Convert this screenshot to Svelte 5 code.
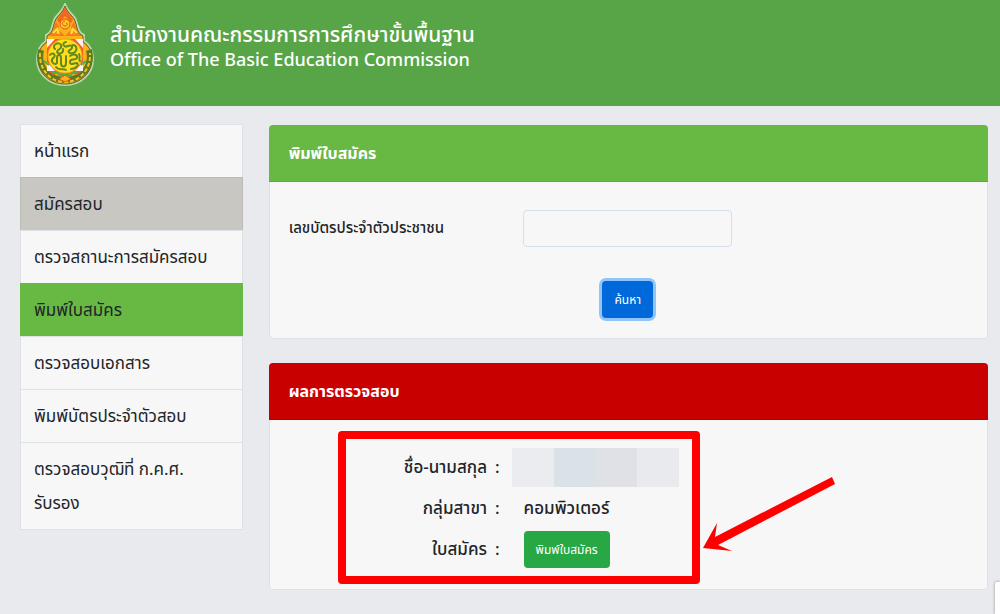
<script lang="ts">
    interface MenuItem {
        label: string;
        state?: 'hover' | 'active';
    }

    const menu: MenuItem[] = [
        { label: 'หน้าแรก' },
        { label: 'สมัครสอบ', state: 'hover' },
        { label: 'ตรวจสถานะการสมัครสอบ' },
        { label: 'พิมพ์ใบสมัคร', state: 'active' },
        { label: 'ตรวจสอบเอกสาร' },
        { label: 'พิมพ์บัตรประจำตัวสอบ' },
        { label: 'ตรวจสอบวุฒิที่ ก.ค.ศ. รับรอง' },
    ];

    let citizenId = $state('');
</script>

<header>
    <svg class="logo" viewBox="0 0 60 84" aria-hidden="true">
        <path
            d="M30 1C32 7 37 11 40 15C43 20 42 26 46 30L49 32V38C55 42 58 49 58 56C58 71 46 82 30 82S2 71 2 56C2 49 5 42 11 38V32L14 30C18 26 17 20 20 15C23 11 28 7 30 1Z"
            fill="#a4572a"
            stroke="#b5dcab"
            stroke-width="2"
        />
        <path
            d="M30 3C32 9 36 12 39 16C42 21 41 27 45 31L48 33V39C54 43 57 49 57 56C57 70 45 81 30 81S3 70 3 56C3 49 6 43 12 39V33L15 31C19 27 18 21 21 16C24 12 28 9 30 3Z"
            fill="#fbb318"
            stroke="#7d5a2c"
            stroke-width="1"
        />
        <path d="M30 4C32 10 36 13 38 17L36 20L30 13L24 20L22 17C24 13 28 10 30 4Z" fill="#f26522" />
        <path d="M21 18L24 24L20 32L25 28L30 33L35 28L40 32L36 24L39 18L42 28L46 33H14L18 28Z" fill="#f47b20" />
        <path d="M18 30L22 26L24 31M42 30L38 26L36 31" fill="none" stroke="#ffe03a" stroke-width="2" />
        <circle cx="30" cy="21" r="5" fill="#ffc62a" stroke="#e8501c" stroke-width="1" />
        <path d="M30 18C26 18 27 23 30 23C33 23 33 20 31 20" fill="none" stroke="#e8501c" stroke-width="1" />
        <path d="M6 47C2 64 14 77 30 77S58 64 54 47" fill="none" stroke="#5d7a20" stroke-width="6" />
        <path
            d="M5 50C4 66 15 79 30 79S56 66 55 50"
            fill="none"
            stroke="#f3c71a"
            stroke-width="2"
            stroke-dasharray="4 2"
        />
        <path d="M12 36H48V67L42 72L36 70L30 76L24 70L18 72L12 67Z" fill="#f15a29" />
        <path d="M12 36H20L12 45ZM48 36H40L48 45ZM12 59L20 68H12ZM48 59L40 68H48Z" fill="#fff0f0" />
        <path d="M9 58L14 62M51 58L46 62M17 70L22 69L25 73L30 71L35 73L38 69L43 70" fill="none" stroke="#4fae4a" stroke-width="2" />
        <path d="M24 76L30 72L36 76L30 79Z" fill="#ffb31a" stroke="#e8501c" />
        <circle cx="30" cy="53" r="17" fill="#ffe01a" stroke="#f9a51a" stroke-width="1" />
        <g fill="none" stroke="#678820" stroke-width="2" stroke-linecap="round" stroke-linejoin="round">
            <path d="M20 46C16 42 24 38 26 42C28 46 22 46 22 49C24 52 29 50 28 46" />
            <path d="M31 39C26 40 29 45 33 43C38 41 38 45 35 47C31 49 36 52 40 49C43 46 41 42 38 42" />
            <path d="M15 52C18 48 22 53 18 55C15 58 19 63 22 60V55C22 51 26 51 26 55V61C27 65 31 64 31 60V53" />
            <path d="M35 53C39 50 43 52 42 55C40 58 35 55 35 59C35 63 39 60 42 60C45 63 39 66 36 66" />
            <path d="M21 64C24 68 28 65 31 67M44 51C46 54 43 57 45 58" />
        </g>
    </svg>
    <div class="org">
        <strong>สำนักงานคณะกรรมการการศึกษาขั้นพื้นฐาน</strong>
        <span>Office of The Basic Education Commission</span>
    </div>
</header>

<main>
    <nav>
        {#each menu as item}
            <a href="#menu" class={item.state}>{item.label}</a>
        {/each}
    </nav>

    <div class="content">
        <section class="card">
            <h2>พิมพ์ใบสมัคร</h2>
            <form class="search" onsubmit={(e) => e.preventDefault()}>
                <label for="citizen-id">เลขบัตรประจำตัวประชาชน</label>
                <input type="text" id="citizen-id" bind:value={citizenId} />
                <button type="submit" class="btn primary">ค้นหา</button>
            </form>
        </section>

        <section class="card">
            <h2 class="danger">ผลการตรวจสอบ</h2>
            <dl>
                <dt>ชื่อ-นามสกุล<span>:</span></dt>
                <dd><div class="masked"></div></dd>
                <dt>กลุ่มสาขา<span>:</span></dt>
                <dd>คอมพิวเตอร์</dd>
                <dt>ใบสมัคร<span>:</span></dt>
                <dd><button type="button" class="btn success">พิมพ์ใบสมัคร</button></dd>
            </dl>
            <div class="highlight">
                <svg class="arrow" viewBox="0 0 132 76" aria-hidden="true">
                    <path d="M0 71L14 46L12 60L129 0L132 7L15 68L29 74Z" fill="#f00" />
                </svg>
            </div>
        </section>
    </div>
</main>

<div class="side-tab"></div>

<style>
    :global(body) {
        background: #e8eaed;
        color: #212529;
        font-family: "Noto Sans", "Noto Sans Thai", "Liberation Sans", sans-serif;
        font-size: 16px;
    }

    header {
        display: flex;
        align-items: flex-start;
        gap: 15px;
        height: 106px;
        padding: 3px 20px 0 35px;
        box-sizing: border-box;
        background: #57a546;
        color: #fff;
    }

    .logo {
        width: 60px;
        height: 84px;
        flex: none;
    }

    .org {
        display: flex;
        flex-direction: column;
        padding-top: 18px;
        font-weight: 500;
    }

    .org strong {
        font-size: 21px;
        line-height: 26px;
        font-weight: 500;
    }

    .org span {
        font-size: 18px;
        line-height: 24px;
    }

    main {
        display: grid;
        grid-template-columns: 23% minmax(0, 1fr);
        align-items: start;
        gap: 26px;
        padding: 18px 12px 24px 20px;
    }

    nav {
        display: flex;
        flex-direction: column;
        background: #f7f7f7;
    }

    nav a {
        padding: 9px 30px 9px 13px;
        border: 1px solid #dfe2e5;
        border-bottom-width: 0;
        color: #212529;
        font-size: 17px;
        line-height: 34px;
        text-decoration: none;
    }

    nav a:last-child {
        border-bottom-width: 1px;
    }

    nav a.hover {
        background: #c9c7c1;
        border-color: #bdbbb5;
    }

    nav a.active {
        background: #68b944;
        border-color: #68b944;
    }

    .content {
        display: flex;
        flex-direction: column;
        gap: 24px;
        padding-top: 1px;
    }

    .card {
        position: relative;
        border: 1px solid #dfe2e5;
        border-radius: 4px;
        background: #f7f7f7;
    }

    h2 {
        margin: -1px -1px 0;
        padding: 0 20px;
        border-radius: 4px 4px 0 0;
        background: #68b944;
        border-bottom: 1px solid #5aab37;
        color: #fff;
        font-size: 16px;
        font-weight: 700;
        line-height: 56px;
    }

    h2.danger {
        background: #c90000;
        border-color: #b90000;
    }

    .search {
        display: grid;
        grid-template-columns: repeat(3, minmax(0, 1fr));
        align-items: center;
        gap: 34px 26px;
        padding: 28px 20px 20px 19px;
    }

    .search label {
        font-size: 15px;
        font-weight: 500;
        white-space: nowrap;
    }

    input {
        height: 37px;
        box-sizing: border-box;
        padding: 6px 12px;
        border: 1px solid #d5dfee;
        border-radius: 4px;
        background: #f7f7f7;
        font: inherit;
    }

    .btn {
        height: 37px;
        padding: 0 12px;
        border: 0;
        border-radius: 4px;
        color: #fff;
        font-family: inherit;
        font-size: 12px;
    }

    .primary {
        grid-column: 2;
        justify-self: center;
        background: #0069d9;
        box-shadow: 0 0 0 3px #8fc5fb;
    }

    .success {
        display: block;
        background: #28a745;
    }

    dl {
        display: grid;
        grid-template-columns: 31% minmax(0, 1fr);
        grid-auto-rows: 41px;
        align-items: center;
        gap: 0 24px;
        margin: 0;
        padding: 27px 20px 19px;
        font-size: 17px;
        font-weight: 500;
    }

    dt {
        text-align: right;
    }

    dt span {
        margin-left: 8px;
    }

    dd {
        margin: 0;
    }

    .masked {
        width: 167px;
        height: 39px;
        margin-left: -12px;
        background: linear-gradient(90deg, #ebecef 25%, #dae2e8 25% 50%, #e0e1e6 50% 75%, #e9eaee 75%);
    }

    .highlight {
        position: absolute;
        top: 67px;
        left: 68px;
        width: 362px;
        height: 153px;
        box-sizing: border-box;
        border: 8px solid #f00;
        border-radius: 4px;
        pointer-events: none;
    }

    .arrow {
        position: absolute;
        top: 38px;
        left: 357px;
        width: 132px;
        height: 76px;
    }

    .side-tab {
        position: fixed;
        right: 0;
        bottom: 0;
        width: 5px;
        height: 32px;
        border-top-left-radius: 2px;
        background: #fff;
        box-shadow: 0 0 3px #888;
    }
</style>
